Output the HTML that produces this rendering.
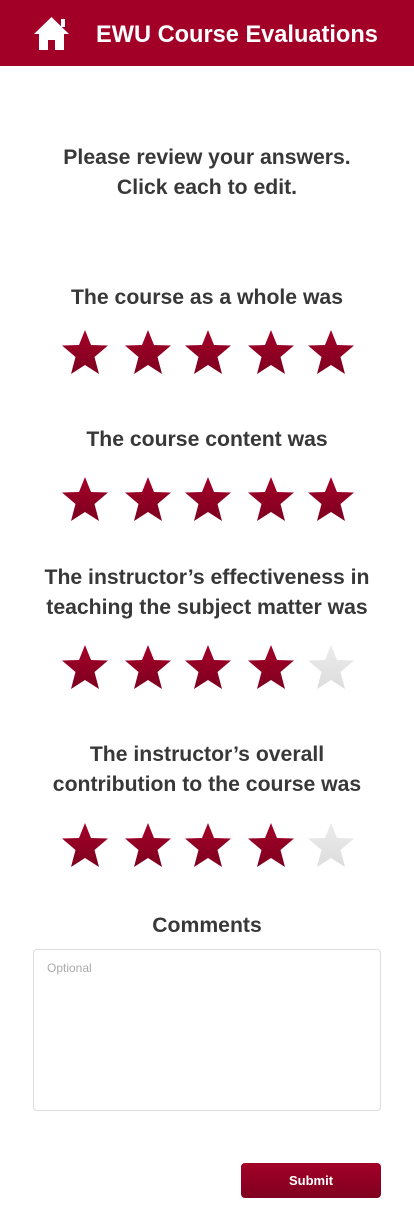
<!DOCTYPE html>
<html><head><meta charset="utf-8"><style>
body{margin:0;width:414px;height:1223px;background:#fff;font-family:"Liberation Sans",sans-serif;color:#333;position:relative;overflow:hidden}
.hdr{position:absolute;left:0;top:0;width:414px;height:66px;background:#a30027}
.hdr .t{position:absolute;left:96px;top:22px;font-size:23.6px;font-weight:bold;color:#fff}
.h{position:absolute;left:0;width:414px;text-align:center;font-size:21.2px;font-weight:bold;line-height:30px;color:#383838}
.stars{position:absolute;left:0;width:414px;height:45px}
.stars svg{position:absolute;top:0}
.ta{position:absolute;left:33px;top:949px;width:346px;height:160px;border:1px solid #ddd;border-radius:4px}
.ta span{position:absolute;left:13px;top:11px;font-size:12px;color:#aaa}
.btn{position:absolute;left:241px;top:1163px;width:140px;height:35px;border-radius:4px;background:linear-gradient(#a30027,#800020);color:#fff;font-size:13px;font-weight:bold;text-align:center;line-height:35px}
</style></head><body>
<svg width="0" height="0" style="position:absolute"><defs>
<linearGradient id="g" x1="0" y1="0" x2="0" y2="1"><stop offset="0" stop-color="#a50028"/><stop offset="1" stop-color="#7d001f"/></linearGradient>
<linearGradient id="gg" x1="0" y1="0" x2="0" y2="1"><stop offset="0" stop-color="#ececec"/><stop offset="1" stop-color="#dcdcdc"/></linearGradient>
</defs></svg>
<div class="hdr">
<svg style="position:absolute;left:33px;top:16px" width="37" height="34" viewBox="0 0 37 34"><path d="M18.5 1 L36 18 L31 18 L31 34 L22 34 L22 24 L15 24 L15 34 L6 34 L6 18 L1 18 Z" fill="#fff"/><rect x="28" y="3" width="4" height="8" fill="#fff"/></svg>
<div class="t">EWU Course Evaluations</div>
</div>
<div class="h" style="top:143px">Please review your answers.<br>Click each to edit.</div>
<div class="h" style="top:283px">The course as a whole was</div>
<div class="h" style="top:425px">The course content was</div>
<div class="h" style="top:563px">The instructor’s effectiveness in<br>teaching the subject matter was</div>
<div class="h" style="top:740px">The instructor’s overall<br>contribution to the course was</div>
<div class="h" style="top:911px">Comments</div>
<div class="stars" style="top:330px" id="s1"></div>
<div class="stars" style="top:477px" id="s2"></div>
<div class="stars" style="top:645px" id="s3"></div>
<div class="stars" style="top:823px" id="s4"></div>
<div class="ta"><span>Optional</span></div>
<div class="btn">Submit</div>
<script>
var xs=[62,125,185,248,308];
function row(id,n){var h='';for(var i=0;i<5;i++){h+='<svg style="left:'+xs[i]+'px" width="46" height="44" viewBox="0 0 46 44"><polygon points="23,0 29,15 46,15.5 32.5,27 37,44 23,35 9,44 13.5,27 0,15.5 17,15" fill="url(#'+(i<n?'g':'gg')+')"/></svg>';}document.getElementById(id).innerHTML=h;}
row('s1',5);row('s2',5);row('s3',4);row('s4',4);
</script>
</body></html>
